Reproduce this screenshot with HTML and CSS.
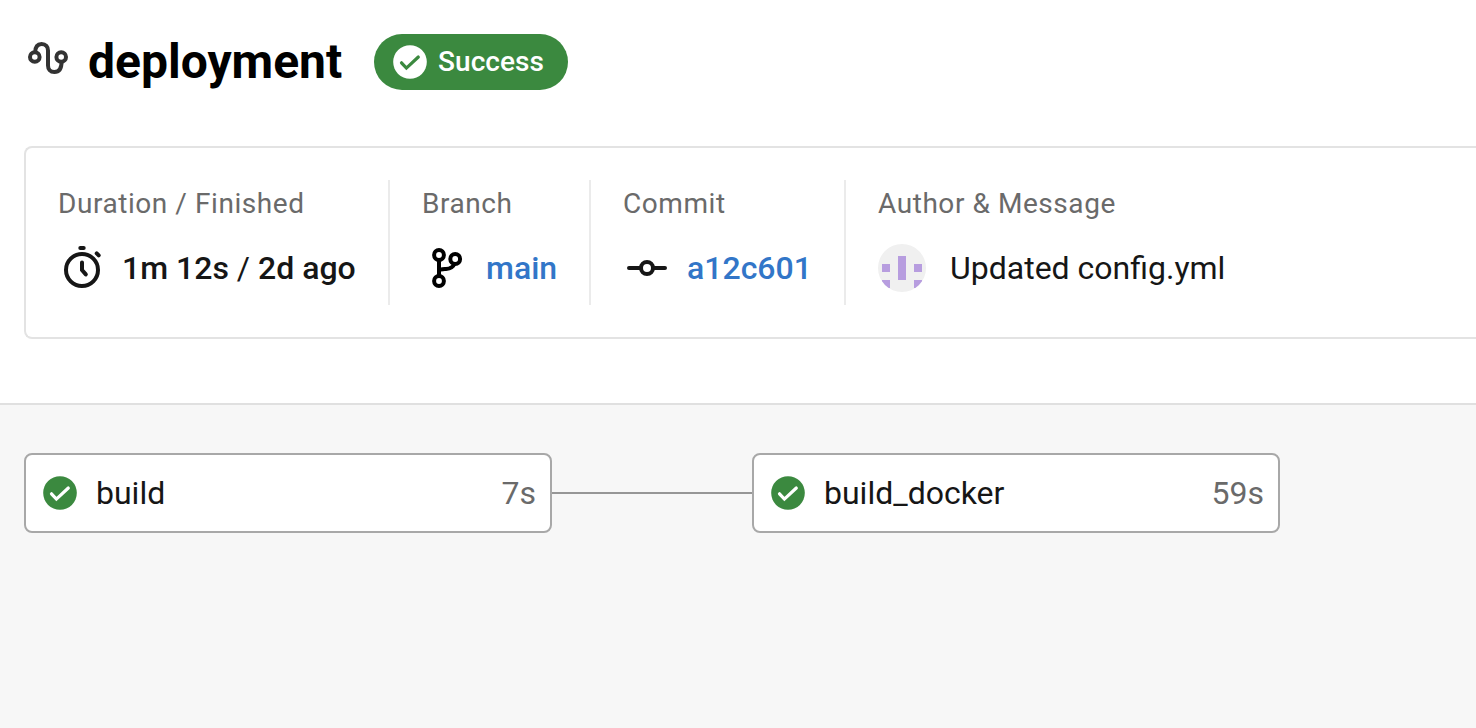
FILE: index.html
```html
<!DOCTYPE html>
<html lang="en">
<head>
<meta charset="utf-8">
<title>deployment</title>
<link rel="stylesheet" href="styles.css">
</head>
<body>
<header class="header">
  <svg class="workflow-icon" viewBox="0 0 48 48" fill="none" stroke="#333" stroke-width="4">
    <circle cx="10.8" cy="23" r="4.800"/>
    <circle cx="37.2" cy="23" r="4.800"/>
    <path d="M11.200 18.500C11.200 13 13.500 10 17.600 10c4.200 0 6.400 2.900 6.400 6.500v15c0 3.600 2.200 6.500 6.400 6.500 4.500 0 7.200-3.500 7.200-10.500"/>
  </svg>
  <h1 class="title">deployment</h1>
  <span class="badge">
    <svg class="badge-icon" viewBox="0 0 34 34" fill="none"><circle cx="17" cy="17" r="16.800" fill="#fff"/><path d="M8.500 17.800l4.900 5.300L25.300 12" stroke="#3b893f" stroke-width="3.200" stroke-linecap="round"/></svg>
    <span class="badge-text">Success</span>
  </span>
</header>

<section class="summary">
  <div class="field duration">
    <div class="label">Duration / Finished</div>
    <div class="value">
      <svg class="icon" viewBox="0 0 48 48" fill="none" stroke="#161616" stroke-width="4" stroke-linecap="round">
        <circle cx="24" cy="26" r="16"/>
        <path d="M22.300 4h3.400M38.700 9.300l2 2"/>
        <path d="M24 18.500V26l3.800 4.400"/>
      </svg>
      <span class="strong">1m 12s <span class="slash">/</span> 2d ago</span>
    </div>
  </div>
  <div class="field branch">
    <div class="label">Branch</div>
    <div class="value">
      <svg class="icon" viewBox="0 0 48 48" fill="none" stroke="#000" stroke-width="4">
        <circle cx="17" cy="11" r="4.900"/>
        <circle cx="33.200" cy="15" r="4.900"/>
        <circle cx="17" cy="37" r="4.900"/>
        <path d="M17 16v16M17 26.500c1-1.300 3-1.300 7-1.600 5-.3 7.300-1.700 8.500-5.400"/>
      </svg>
      <a class="strong link">main</a>
    </div>
  </div>
  <div class="field commit">
    <div class="label">Commit</div>
    <div class="value">
      <svg class="icon" viewBox="0 0 48 48" fill="none" stroke="#161616" stroke-width="4" stroke-linecap="round">
        <circle cx="24" cy="24" r="6"/>
        <path d="M6 24h12M30 24h12"/>
      </svg>
      <a class="strong link">a12c601</a>
    </div>
  </div>
  <div class="field author">
    <div class="label">Author &amp; Message</div>
    <div class="value">
      <svg class="avatar" viewBox="0 0 48 48">
        <clipPath id="round"><circle cx="24" cy="24" r="24"/></clipPath>
        <g clip-path="url(#round)">
          <path fill="#f0f0f0" d="M0 0h48v48H0z"/>
          <path fill="#b79ddf" d="M20 12h8v24h-8zM4 20h8v8H4zM36 20h8v8h-8zM4 36h8v8H4zM36 36h8v8h-8z"/>
        </g>
      </svg>
      <span class="message">Updated config.yml</span>
    </div>
  </div>
</section>

<main class="graph">
  <div class="job">
    <svg class="job-icon" viewBox="0 0 34 34" fill="none"><circle cx="17" cy="17" r="16.800" fill="#3b893f"/><path d="M8.500 17.800l4.900 5.300L25.300 12" stroke="#fff" stroke-width="3.200" stroke-linecap="round"/></svg>
    <span class="job-name">build</span>
    <span class="job-time">7s</span>
  </div>
  <div class="edge"></div>
  <div class="job">
    <svg class="job-icon" viewBox="0 0 34 34" fill="none"><circle cx="17" cy="17" r="16.800" fill="#3b893f"/><path d="M8.500 17.800l4.900 5.300L25.300 12" stroke="#fff" stroke-width="3.200" stroke-linecap="round"/></svg>
    <span class="job-name">build_docker</span>
    <span class="job-time">59s</span>
  </div>
</main>
</body>
</html>
```

FILE: styles.css
```css
* { box-sizing: border-box; }

body {
  margin: 0;
  height: 728px;
  overflow: hidden;
  display: flex;
  flex-direction: column;
  background: #fff;
  color: #161616;
  font-family: Roboto, sans-serif;
}

svg { display: block; flex: none; }

.header {
  display: flex;
  align-items: center;
  height: 56px;
  margin: 34px 0 56px 24px;
}
.workflow-icon { width: 48px; height: 48px; margin-bottom: 8px; }
.title {
  width: 286px;
  margin: 0 0 0 16px;
  font-size: 48px;
  line-height: 56px;
  font-weight: 700;
  color: #000;
  white-space: nowrap;
}
.badge {
  display: flex;
  align-items: center;
  width: 194px;
  height: 56px;
  padding-left: 19px;
  gap: 11px;
  border-radius: 28px;
  background: #3b893f;
  color: #fff;
  font-size: 28px;
  font-weight: 500;
  letter-spacing: 0.05px;
}
.badge-icon, .job-icon { width: 34px; height: 34px; }
.badge-text { padding-bottom: 2px; }

.summary {
  display: flex;
  flex: none;
  height: 193px;
  margin-left: 24px;
  padding: 32px 0 32px 32px;
  border: 2px solid #e3e3e3;
  border-right: 0;
  border-radius: 8px 0 0 8px;
}
.field {
  flex: none;
  margin-right: 32px;
  border-right: 2px solid #ebebeb;
}
.duration { width: 332px; }
.branch { width: 169px; }
.commit { width: 223px; }
.author { border-right: 0; }
.label {
  height: 48px;
  line-height: 48px;
  font-size: 28px;
  letter-spacing: 0.56px;
  color: #6a6a6a;
  white-space: nowrap;
}
.value {
  display: flex;
  align-items: center;
  height: 48px;
  margin-top: 16px;
  font-size: 32px;
  white-space: nowrap;
}
.icon { width: 48px; height: 48px; margin-right: 16px; }
.strong { font-weight: 500; }
.slash { font-weight: 400; }
.link { color: #3276c8; }
.avatar { width: 48px; height: 48px; margin-right: 24px; }

.graph {
  display: flex;
  flex: 1;
  align-items: flex-start;
  margin-top: 64px;
  padding: 48px 24px;
  border-top: 2px solid #e0e0e0;
  background: #f7f7f7;
}
.job {
  display: flex;
  align-items: center;
  width: 528px;
  height: 80px;
  padding: 0 14px 0 17px;
  border: 2px solid #a8a8a8;
  border-radius: 8px;
  background: #fff;
  font-size: 32px;
}
.job-name { margin-left: 19px; }
.job-time { margin-left: auto; color: #6a6a6a; }
.edge {
  width: 200px;
  height: 2px;
  margin-top: 39px;
  background: #969696;
}
```
